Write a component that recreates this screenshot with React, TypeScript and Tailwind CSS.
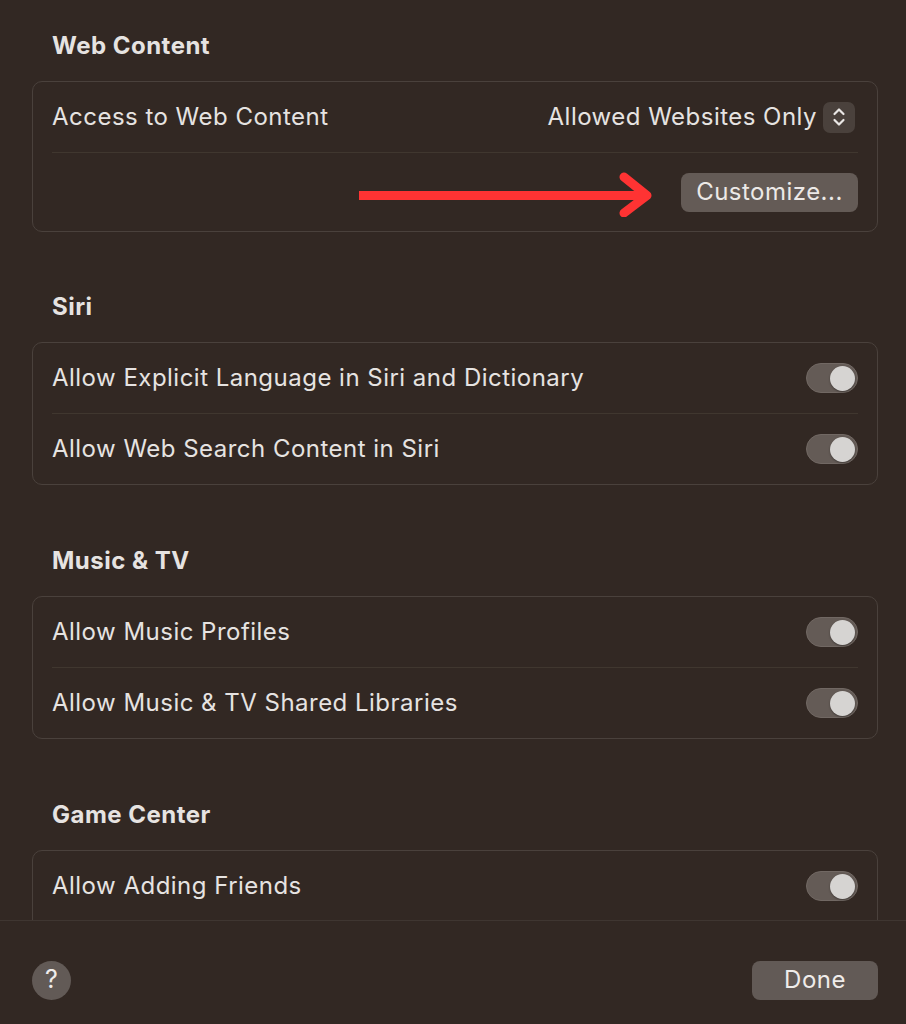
import type { ReactNode } from "react";

const sections = [
  {
    title: "Siri",
    rows: ["Allow Explicit Language in Siri and Dictionary", "Allow Web Search Content in Siri"],
    more: false,
  },
  {
    title: "Music & TV",
    rows: ["Allow Music Profiles", "Allow Music & TV Shared Libraries"],
    more: false,
  },
  {
    // list keeps going below the footer edge
    title: "Game Center",
    rows: ["Allow Adding Friends"],
    more: true,
  },
];

function Toggle() {
  return (
    <div className="w-[52px] h-[30px] rounded-full bg-[#645b56] border border-[#716863] flex items-center justify-end px-[2px] shrink-0">
      <div className="w-[25px] h-[25px] rounded-full bg-[#d6d4d2] shadow-[0_1px_2px_rgba(0,0,0,0.35)]" />
    </div>
  );
}

function Heading({ children }: { children: ReactNode }) {
  return (
    <h2 className="px-[52px] h-[28px] leading-[28px] text-[24px] tracking-[0.02em] font-bold text-[#e6e3e1] mb-[21px]">
      {children}
    </h2>
  );
}

function Card({ children }: { children: ReactNode }) {
  return <div className="ml-[32px] mr-[28px] rounded-[10px] border border-[#4a413c] px-[19px]">{children}</div>;
}

export default function App() {
  return (
    <div
      className="w-[906px] h-[1024px] bg-[#322823] text-[#e6e3e1] flex flex-col overflow-hidden"
      style={{ fontFamily: "Inter, 'Noto Sans', sans-serif" }}
    >
      {/* scroll area */}
      <div className="h-[920px] overflow-hidden pt-[32px] shrink-0">
        <section className="mb-[61px]">
          <Heading>Web Content</Heading>
          <Card>
            <div className="h-[71px] flex items-center justify-between border-b border-[#40372f]">
              <span className="text-[24px] tracking-[0.02em]">Access to Web Content</span>
              <div className="flex items-center gap-[6px] mr-[3px]">
                <span className="text-[24px] tracking-[0.02em]">Allowed Websites Only</span>
                <div className="w-[32px] h-[31px] rounded-[7px] bg-[#4a413c] flex items-center justify-center">
                  <svg width="14" height="22" viewBox="0 0 14 22" fill="none" stroke="#eae7e5" strokeWidth="2.2" strokeLinecap="round" strokeLinejoin="round">
                    <path d="M2.5 8 L7 3.5 L11.5 8" />
                    <path d="M2.5 14 L7 18.5 L11.5 14" />
                  </svg>
                </div>
              </div>
            </div>
            <div className="h-[78px] flex items-center justify-end gap-[26px]">
              <svg width="300" height="50" viewBox="0 0 300 50" fill="none" stroke="#ff3333" strokeWidth="9" strokeLinecap="round" strokeLinejoin="round">
                <path d="M4 28.5 H290" strokeLinecap="butt" />
                <path d="M269 10 L292 28.5 L269 46" />
              </svg>
              <button className="w-[177px] h-[39px] rounded-[8px] bg-[#645b56] text-[24px] tracking-[0.02em] text-[#ece9e7] flex items-center justify-center">
                Customize...
              </button>
            </div>
          </Card>
        </section>

        {sections.map((s) => (
          <section key={s.title} className="mb-[62px]">
            <Heading>{s.title}</Heading>
            <Card>
              {s.rows.map((r, i) => (
                <div
                  key={r}
                  className={`flex items-center justify-between ${i < s.rows.length - 1 || s.more ? "h-[71px] border-b border-[#40372f]" : "h-[70px]"}`}
                >
                  <span className="text-[24px] tracking-[0.02em]">{r}</span>
                  <Toggle />
                </div>
              ))}
              {s.more && <div className="h-[70px]" />}
            </Card>
          </section>
        ))}
      </div>

      {/* footer */}
      <div className="flex-1 border-t border-[#3f3631] flex items-center justify-between pl-[32px] pr-[28px] pt-[20px] pb-[5px]">
        <button className="w-[39px] h-[39px] rounded-full bg-[#625a56] text-[25px] text-[#efecea] flex items-center justify-center">
          ?
        </button>
        <button className="w-[126px] h-[39px] rounded-[8px] bg-[#625a56] text-[24px] tracking-[0.02em] text-[#efecea] flex items-center justify-center">
          Done
        </button>
      </div>
    </div>
  );
}
